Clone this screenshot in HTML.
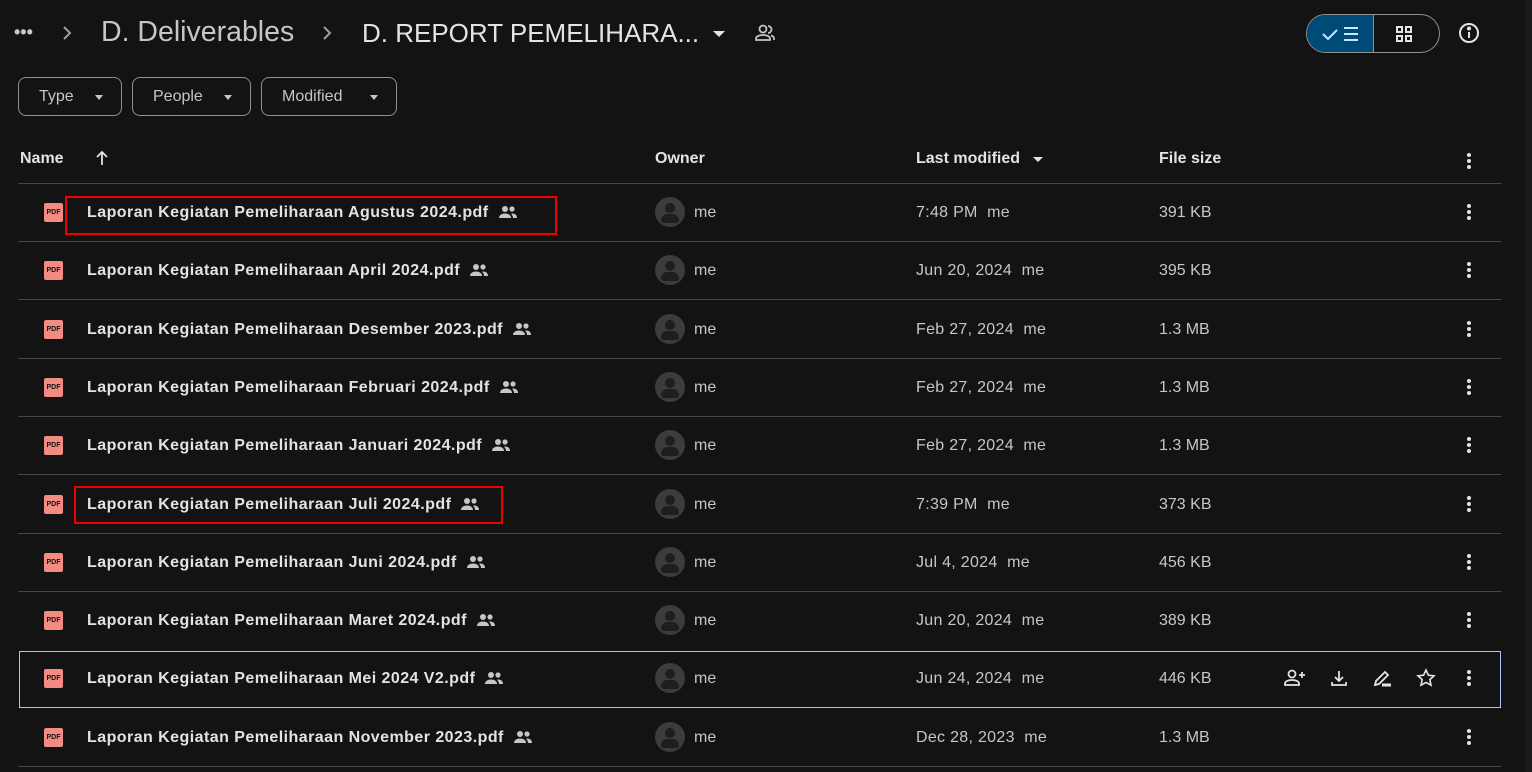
<!DOCTYPE html>
<html><head><meta charset="utf-8"><style>
*{box-sizing:border-box;margin:0;padding:0}
body{width:1532px;height:772px;background:#131314;color:#e3e3e3;font-family:"Liberation Sans",sans-serif;position:relative;overflow:hidden}
.a{position:absolute;white-space:nowrap}
.chip{position:absolute;top:77px;height:39px;border:1px solid #8e918f;border-radius:8px;font-size:16px;color:#c4c7c5;padding:10px 0 0 20px}
.chip:after{content:"";position:absolute;right:18px;top:17px;border:4.5px solid transparent;border-top:5px solid #c4c7c5}
.hd{position:absolute;top:150px;font-size:16px;font-weight:bold;color:#e3e3e3}
.line{position:absolute;left:18px;width:1483px;height:1px;background:#444746}
.name{position:absolute;left:87px;font-size:16px;letter-spacing:0.45px;font-weight:bold;color:#e3e3e3;white-space:nowrap}
.pdf{position:absolute;left:44px;width:19px;height:19px;background:#f28b82;border-radius:2px;color:#131314;font-size:7px;font-weight:bold;text-align:center;line-height:19px}
.av{position:absolute;left:655px;width:30px;height:30px;border-radius:50%;background:#3c3c3c}
.av:before{content:"";position:absolute;left:10px;top:6px;width:10px;height:10px;border-radius:50%;background:#1e1e1e}
.av:after{content:"";position:absolute;left:6px;top:17px;width:18px;height:9px;border-radius:9px 9px 4px 4px;background:#1e1e1e}
.me{position:absolute;left:694px;font-size:16px;color:#c4c7c5}
.dt{position:absolute;left:916px;font-size:16px;letter-spacing:0.3px;color:#c4c7c5}
.sz{position:absolute;left:1159px;font-size:16px;color:#c4c7c5}
.dots{position:absolute;left:1467px;width:4px}
.dots i{display:block;width:4px;height:4px;border-radius:50%;background:#e3e3e3;margin-bottom:2px}
.red{position:absolute;border:2px solid #e00;}
</style></head><body>
<div style="position:absolute;right:0;top:0;width:7px;height:772px;background:#1b1b1c"></div>
<div class="a" style="left:14px;top:22px;font-size:18px;font-weight:bold;color:#c4c7c5;letter-spacing:0px">•••</div>
<svg class="a" style="left:60px;top:24px" width="14" height="18"><path d="M4 3l6 6-6 6" stroke="#9aa0a6" stroke-width="2" fill="none"/></svg>
<div class="a" style="left:101px;top:16px;font-size:28.5px;color:#c4c7c5">D. Deliverables</div>
<svg class="a" style="left:320px;top:24px" width="14" height="18"><path d="M4 3l6 6-6 6" stroke="#9aa0a6" stroke-width="2" fill="none"/></svg>
<div class="a" style="left:362px;top:18px;font-size:26px;color:#e3e3e3">D. REPORT PEMELIHARA...</div>
<svg class="a" style="left:712px;top:30px" width="14" height="8"><path d="M1 1h12L7 7z" fill="#e3e3e3"/></svg>
<svg class="a" style="left:754px;top:23px" width="22" height="20" fill="none" stroke="#c4c7c5" stroke-width="1.8"><circle cx="9" cy="6" r="3.5"/><path d="M2 17v-1.5c0-2 3-3.5 7-3.5s7 1.5 7 3.5V17z"/><path d="M14 3a3.5 3.5 0 0 1 0 7M17 12.5c2 .6 3 1.6 3 3V17"/></svg>
<div class="a" style="left:1306px;top:14px;width:134px;height:39px;border:1px solid #8e918f;border-radius:20px;overflow:hidden">
<div style="position:absolute;left:0;top:0;width:67px;height:39px;background:#004a77;border-right:1px solid #8e918f"></div>
<svg style="position:absolute;left:14px;top:10px" width="40" height="18" fill="none" stroke="#c2e7ff" stroke-width="2"><path d="M2 9l5 5 9-9"/><path d="M23 3h14M23 9h14M23 15h14"/></svg>
<svg style="position:absolute;left:88px;top:10px" width="18" height="18" fill="none" stroke="#e3e3e3" stroke-width="2"><rect x="2" y="2" width="5" height="5"/><rect x="11" y="2" width="5" height="5"/><rect x="2" y="11" width="5" height="5"/><rect x="11" y="11" width="5" height="5"/></svg>
</div>
<svg class="a" style="left:1458px;top:22px" width="22" height="22" fill="none" stroke="#e3e3e3" stroke-width="2"><circle cx="11" cy="11" r="9"/><path d="M11 10v6"/><circle cx="11" cy="6.5" r="1" fill="#e3e3e3"/></svg>
<div class="chip" style="left:18px;width:104px">Type</div>
<div class="chip" style="left:132px;width:119px">People</div>
<div class="chip" style="left:261px;width:136px">Modified</div>
<div class="hd" style="left:20px">Name</div>
<svg class="a" style="left:94px;top:150px" width="16" height="16" fill="none" stroke="#e3e3e3" stroke-width="1.8"><path d="M8 15V2M3 7l5-5 5 5"/></svg>
<div class="hd" style="left:655px">Owner</div>
<div class="hd" style="left:916px">Last modified</div>
<svg class="a" style="left:1032px;top:156px" width="12" height="7"><path d="M1 1h10L6 6z" fill="#e3e3e3"/></svg>
<div class="hd" style="left:1159px">File size</div>
<div class="dots" style="top:153px"><i></i><i></i><i></i></div>
<div class="line" style="top:183px"></div>
<div id="rows"></div>
<div style="position:absolute;left:19px;top:651px;width:1482px;height:57px;border:1px solid #a8c7fa"></div>
<div class="red" style="left:65px;top:196px;width:492px;height:39px"></div>
<div class="red" style="left:74px;top:486px;width:429px;height:38px"></div>
<svg class="a" style="left:1284px;top:669px" width="22" height="18" fill="none" stroke="#e3e3e3" stroke-width="1.8"><circle cx="8" cy="5" r="3.5"/><path d="M1 16v-1.5c0-2 3-3.5 7-3.5s7 1.5 7 3.5V16z"/><path d="M18 3v6M15 6h6"/></svg>
<svg class="a" style="left:1330px;top:669px" width="18" height="18" fill="none" stroke="#e3e3e3" stroke-width="1.8"><path d="M9 2v10M5 8l4 4 4-4M2 13v3h14v-3"/></svg>
<svg class="a" style="left:1373px;top:669px" width="20" height="18" fill="none" stroke="#e3e3e3" stroke-width="1.8"><path d="M2 16l1-4 9-9 3 3-9 9z"/><path d="M9 16h9" stroke-width="3"/></svg>
<svg class="a" style="left:1416px;top:668px" width="20" height="20" fill="none" stroke="#e3e3e3" stroke-width="1.6"><path d="M10 2l2.4 5.2 5.6.6-4.2 3.8 1.2 5.6L10 14.4 5 17.2l1.2-5.6L2 7.8l5.6-.6z"/></svg>
<script>
var d=[["Agustus 2024.pdf","7:48 PM","391 KB"],["April 2024.pdf","Jun 20, 2024","395 KB"],["Desember 2023.pdf","Feb 27, 2024","1.3 MB"],["Februari 2024.pdf","Feb 27, 2024","1.3 MB"],["Januari 2024.pdf","Feb 27, 2024","1.3 MB"],["Juli 2024.pdf","7:39 PM","373 KB"],["Juni 2024.pdf","Jul 4, 2024","456 KB"],["Maret 2024.pdf","Jun 20, 2024","389 KB"],["Mei 2024 V2.pdf","Jun 24, 2024","446 KB"],["November 2023.pdf","Dec 28, 2023","1.3 MB"]];
var h="";d.forEach(function(r,i){var c=212+i*58.3;var t=c-8;
h+='<div class="pdf" style="top:'+(c-9)+'px">PDF</div><div class="name" style="top:'+(t)+'px">Laporan Kegiatan Pemeliharaan '+r[0]+'<svg style="margin-left:9px;vertical-align:-2px" width="20" height="14" fill="#c4c7c5"><circle cx="7" cy="4" r="3"/><path d="M1 13c0-3 3-4.5 6-4.5s6 1.5 6 4.5z"/><circle cx="14" cy="4" r="2.6"/><path d="M14 8.5c3 0 5 1.5 5 4.5h-4c0-2-1-3.5-2-4.3z"/></svg></div><div class="av" style="top:'+(c-15)+'px"></div><div class="me" style="top:'+t+'px">me</div><div class="dt" style="top:'+t+'px">'+r[1]+'&nbsp; me</div><div class="sz" style="top:'+t+'px">'+r[2]+'</div><div class="dots" style="top:'+(c-8)+'px"><i></i><i></i><i></i></div>';
if(i!=7&&i!=8)h+='<div class="line" style="top:'+Math.round(c+29)+'px"></div>';});
document.getElementById("rows").innerHTML=h;
</script>
</body></html>
